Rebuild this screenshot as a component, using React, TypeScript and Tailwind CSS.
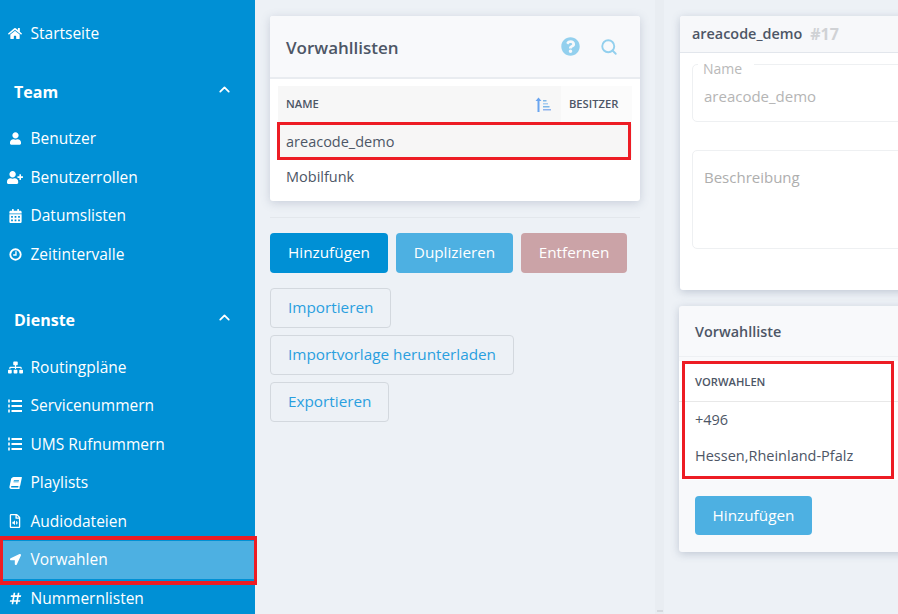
import type { ReactNode } from 'react';
import {
  FaBook,
  FaCalendarAlt,
  FaHashtag,
  FaHome,
  FaLocationArrow,
  FaQuestionCircle,
  FaRegFileAudio,
  FaSitemap,
  FaUser,
  FaUserPlus,
} from 'react-icons/fa';
import { ChevronUp, Search } from 'lucide-react';

const font = { fontFamily: '"Open Sans", "Noto Sans", sans-serif' };

function ListIcon() {
  return (
    <svg viewBox="0 0 14 14" className="w-[14px] h-[14px]" fill="currentColor">
      <rect x="0" y="0.5" width="2" height="3" opacity="0.8" />
      <rect x="0" y="5.5" width="2" height="3" opacity="0.8" />
      <rect x="0" y="10.5" width="2" height="3" opacity="0.8" />
      <rect x="3.5" y="1" width="10.5" height="2" />
      <rect x="3.5" y="6" width="10.5" height="2" />
      <rect x="3.5" y="11" width="10.5" height="2" />
    </svg>
  );
}

function ClockIcon() {
  return (
    <svg viewBox="0 0 14 14" className="w-[13px] h-[13px]" fill="none" stroke="currentColor">
      <circle cx="7" cy="7" r="5.6" strokeWidth="2" />
      <path d="M7.5 3.5V7.5H4.5" strokeWidth="1.5" />
    </svg>
  );
}

function SortIcon() {
  return (
    <svg viewBox="0 0 16 15" className="w-[16px] h-[15px]">
      <path d="M3.5 0.5L6.5 4H4.5V15H2.5V4H0.5Z" fill="#6aa5f0" />
      <rect x="8" y="3" width="3.5" height="1.5" fill="#7fb8e8" />
      <rect x="8" y="6" width="5" height="1.5" fill="#a9cdf0" />
      <rect x="8" y="9" width="6.5" height="1.5" fill="#7fb8e8" />
      <rect x="8" y="12" width="8" height="1.5" fill="#8fb4ee" />
    </svg>
  );
}

const teamItems = [
  { label: 'Benutzer', icon: <FaUser className="w-[11px] h-[13px]" /> },
  { label: 'Benutzerrollen', icon: <FaUserPlus className="w-[16px] h-[13px]" /> },
  { label: 'Datumslisten', icon: <FaCalendarAlt className="w-[13px] h-[14px]" /> },
  { label: 'Zeitintervalle', icon: <ClockIcon /> },
];

const serviceItems = [
  { label: 'Routingpläne', icon: <FaSitemap className="w-[15px] h-[13px]" /> },
  { label: 'Servicenummern', icon: <ListIcon /> },
  { label: 'UMS Rufnummern', icon: <ListIcon /> },
  { label: 'Playlists', icon: <FaBook className="w-[13px] h-[12px] -skew-x-12" /> },
  { label: 'Audiodateien', icon: <FaRegFileAudio className="w-[12px] h-[14px]" /> },
];

function NavItem({ label, icon }: { label: string; icon: ReactNode }) {
  return (
    <a className="flex items-center h-[38.5px] text-[15.5px] text-white">
      <span className="w-[30.5px] flex justify-center shrink-0">{icon}</span>
      <span>{label}</span>
    </a>
  );
}

function NavHeading({ label }: { label: string }) {
  return (
    <div className="flex items-center justify-between h-[24px] pl-[14px] pr-[22px] text-[16px] font-bold text-white">
      <span>{label}</span>
      <ChevronUp className="w-[17px] h-[17px] -mt-[6px]" strokeWidth={2.5} />
    </div>
  );
}

function Sidebar() {
  return (
    <aside className="w-[255px] shrink-0 bg-[#0090d5] pt-[14px]">
      <NavItem label="Startseite" icon={<FaHome className="w-[14px] h-[13px]" />} />
      <div className="mt-[27.5px] mb-[15.5px]">
        <NavHeading label="Team" />
      </div>
      {teamItems.map((item) => (
        <NavItem key={item.label} {...item} />
      ))}
      <div className="mt-[34.5px] mb-[16px]">
        <NavHeading label="Dienste" />
      </div>
      {serviceItems.map((item) => (
        <NavItem key={item.label} {...item} />
      ))}
      <div className="relative bg-[#4db0e2]">
        <NavItem label="Vorwahlen" icon={<FaLocationArrow className="w-[11px] h-[11px]" />} />
        <span className="absolute left-0 -right-[2px] -top-[4.5px] -bottom-[6px] border-x-[3px] border-y-[4px] border-[#ed1c24]" />
      </div>
      <NavItem label="Nummernlisten" icon={<FaHashtag className="w-[13px] h-[13px]" />} />
    </aside>
  );
}

function OutlineButton({ label }: { label: string }) {
  return (
    <button className="block h-[40px] px-[17px] pb-[2px] rounded-[4px] border border-[#d3d8de] text-[15.3px] text-[#2a9fdf]">
      {label}
    </button>
  );
}

function ListColumn() {
  return (
    <section className="w-[400px] shrink-0 pl-[15px] pr-[15px] pt-[16px]">
      <div className="rounded-[3px] bg-white shadow-[0_2px_10px_rgba(90,105,135,0.25)]">
        <div className="flex items-center justify-between h-[63px] pl-[16px] pr-[22px] bg-[#f8f9fb] border-b-2 border-[#e9ecf0] rounded-t-[3px]">
          <h2 className="pt-[2px] text-[17px] font-semibold text-[#4d5666]">Vorwahllisten</h2>
          <div className="flex items-center gap-[20px]">
            <FaQuestionCircle className="w-[19px] h-[19px] text-[#93d0ee]" />
            <Search className="w-[18px] h-[18px] text-[#93d0ee]" strokeWidth={2.5} />
          </div>
        </div>
        <div className="px-[8px] pt-[7px] pb-[7px]">
          <div className="flex h-[36px] text-[11.2px] font-semibold text-[#4d5666]">
            <div className="flex items-center justify-between w-[283px] pl-[8px] pr-[10px] bg-[#f7f7f7]">
              <span>NAME</span>
              <SortIcon />
            </div>
            <div className="flex items-center flex-1 pl-[8px] bg-[#fbfbfb]">BESITZER</div>
          </div>
          <div className="relative mt-[2px] flex items-center h-[34px] pl-[8px] pt-[1px] bg-[#f7f6f6] text-[14.5px] text-[#4d5666]">
            areacode_demo
            <span className="absolute -left-[1px] right-[1px] -top-[2px] -bottom-[2px] border-[3px] border-[#ed1c24]" />
          </div>
          <div className="flex items-center h-[36px] pl-[8px] pt-[1px] text-[14.5px] text-[#4d5666]">Mobilfunk</div>
        </div>
      </div>
      <div className="mt-[16px] h-px bg-[#e3e7ec]" />
      <div className="mt-[15px] flex gap-[8px] text-[15.3px] text-white">
        <button className="h-[40px] w-[118px] pb-[2px] rounded-[4px] bg-[#0090d5]">Hinzufügen</button>
        <button className="h-[40px] w-[117px] pb-[2px] rounded-[4px] bg-[#4db0e2]">Duplizieren</button>
        <button className="h-[40px] w-[106px] pb-[2px] rounded-[4px] bg-[#cba3a7]">Entfernen</button>
      </div>
      <div className="mt-[15px] flex flex-col gap-[7px] items-start">
        <OutlineButton label="Importieren" />
        <OutlineButton label="Importvorlage herunterladen" />
        <OutlineButton label="Exportieren" />
      </div>
    </section>
  );
}

function DetailColumn() {
  return (
    <section className="w-[260px] shrink-0 pl-[16px] pt-[16px]">
      <div className="h-[274px] w-[260px] rounded-[3px] bg-white shadow-[0_2px_8px_rgba(90,105,135,0.3)]">
        <div className="flex items-center gap-[8px] h-[37px] pl-[12px] bg-[#f7f8fa] border-b border-[#e2e6ec] rounded-t-[3px]">
          <span className="text-[14.4px] font-semibold text-[#4d5666]">areacode_demo</span>
          <span className="text-[16px] font-bold text-[#d0d2d5]">#17</span>
        </div>
        <div className="px-[12px] pt-[11px]">
          <div className="relative h-[58px] rounded-[5px] border border-[#eef0f2] pl-[11px] pt-[20px] text-[15px] text-[#b5b5b5]">
            areacode_demo
            <span className="absolute left-[5px] -top-[2px] w-[56px] pl-[5px] bg-white text-[14px] leading-[12px] text-[#b9b9b9]">Name</span>
          </div>
          <div className="mt-[28px] h-[99px] rounded-[5px] border border-[#eef0f2] pl-[11px] pt-[15px] text-[15px] text-[#aeaeae]">
            Beschreibung
          </div>
        </div>
      </div>
      <div className="mt-[16px] -ml-[1px] h-[246px] w-[261px] rounded-[3px] bg-[#f8f9fb] shadow-[0_2px_8px_rgba(90,105,135,0.3)]">
        <div className="flex items-center h-[51px] pl-[16px] pt-[2px] text-[14.4px] font-semibold text-[#4d5666] border-b border-[#eef0f3]">
          Vorwahlliste
        </div>
        <div className="mt-[4px] bg-white h-[119px]">
          <div className="relative h-[115px]">
            <div className="flex items-center h-[41px] pl-[16px] pt-[2px] text-[11.2px] font-semibold text-[#4d5666] border-b border-[#e8e8e8]">
              VORWAHLEN
            </div>
            <div className="flex items-center h-[36px] pl-[16px] text-[14.5px] text-[#4d5666]">+496</div>
            <div className="flex items-center h-[35px] pl-[16px] text-[14.5px] text-[#4d5666]">Hessen,Rheinland-Pfalz</div>
            <span className="absolute left-[3px] w-[212px] top-0 h-[118px] border-[3px] border-[#ed1c24]" />
          </div>
        </div>
        <button className="mt-[16px] ml-[16px] h-[39px] w-[117px] rounded-[4px] bg-[#4db0e2] text-[15.3px] text-white">
          Hinzufügen
        </button>
      </div>
    </section>
  );
}

export default function App() {
  return (
    <div className="flex w-[898px] h-[614px] overflow-hidden bg-[#edf1f6]" style={font}>
      <Sidebar />
      <ListColumn />
      <div className="relative w-[9px] shrink-0 bg-[#e9edf2]">
        <span className="absolute left-[2px] bottom-[2px] w-[6px] h-[2px] bg-[#d5d9de]" />
      </div>
      <DetailColumn />
    </div>
  );
}
